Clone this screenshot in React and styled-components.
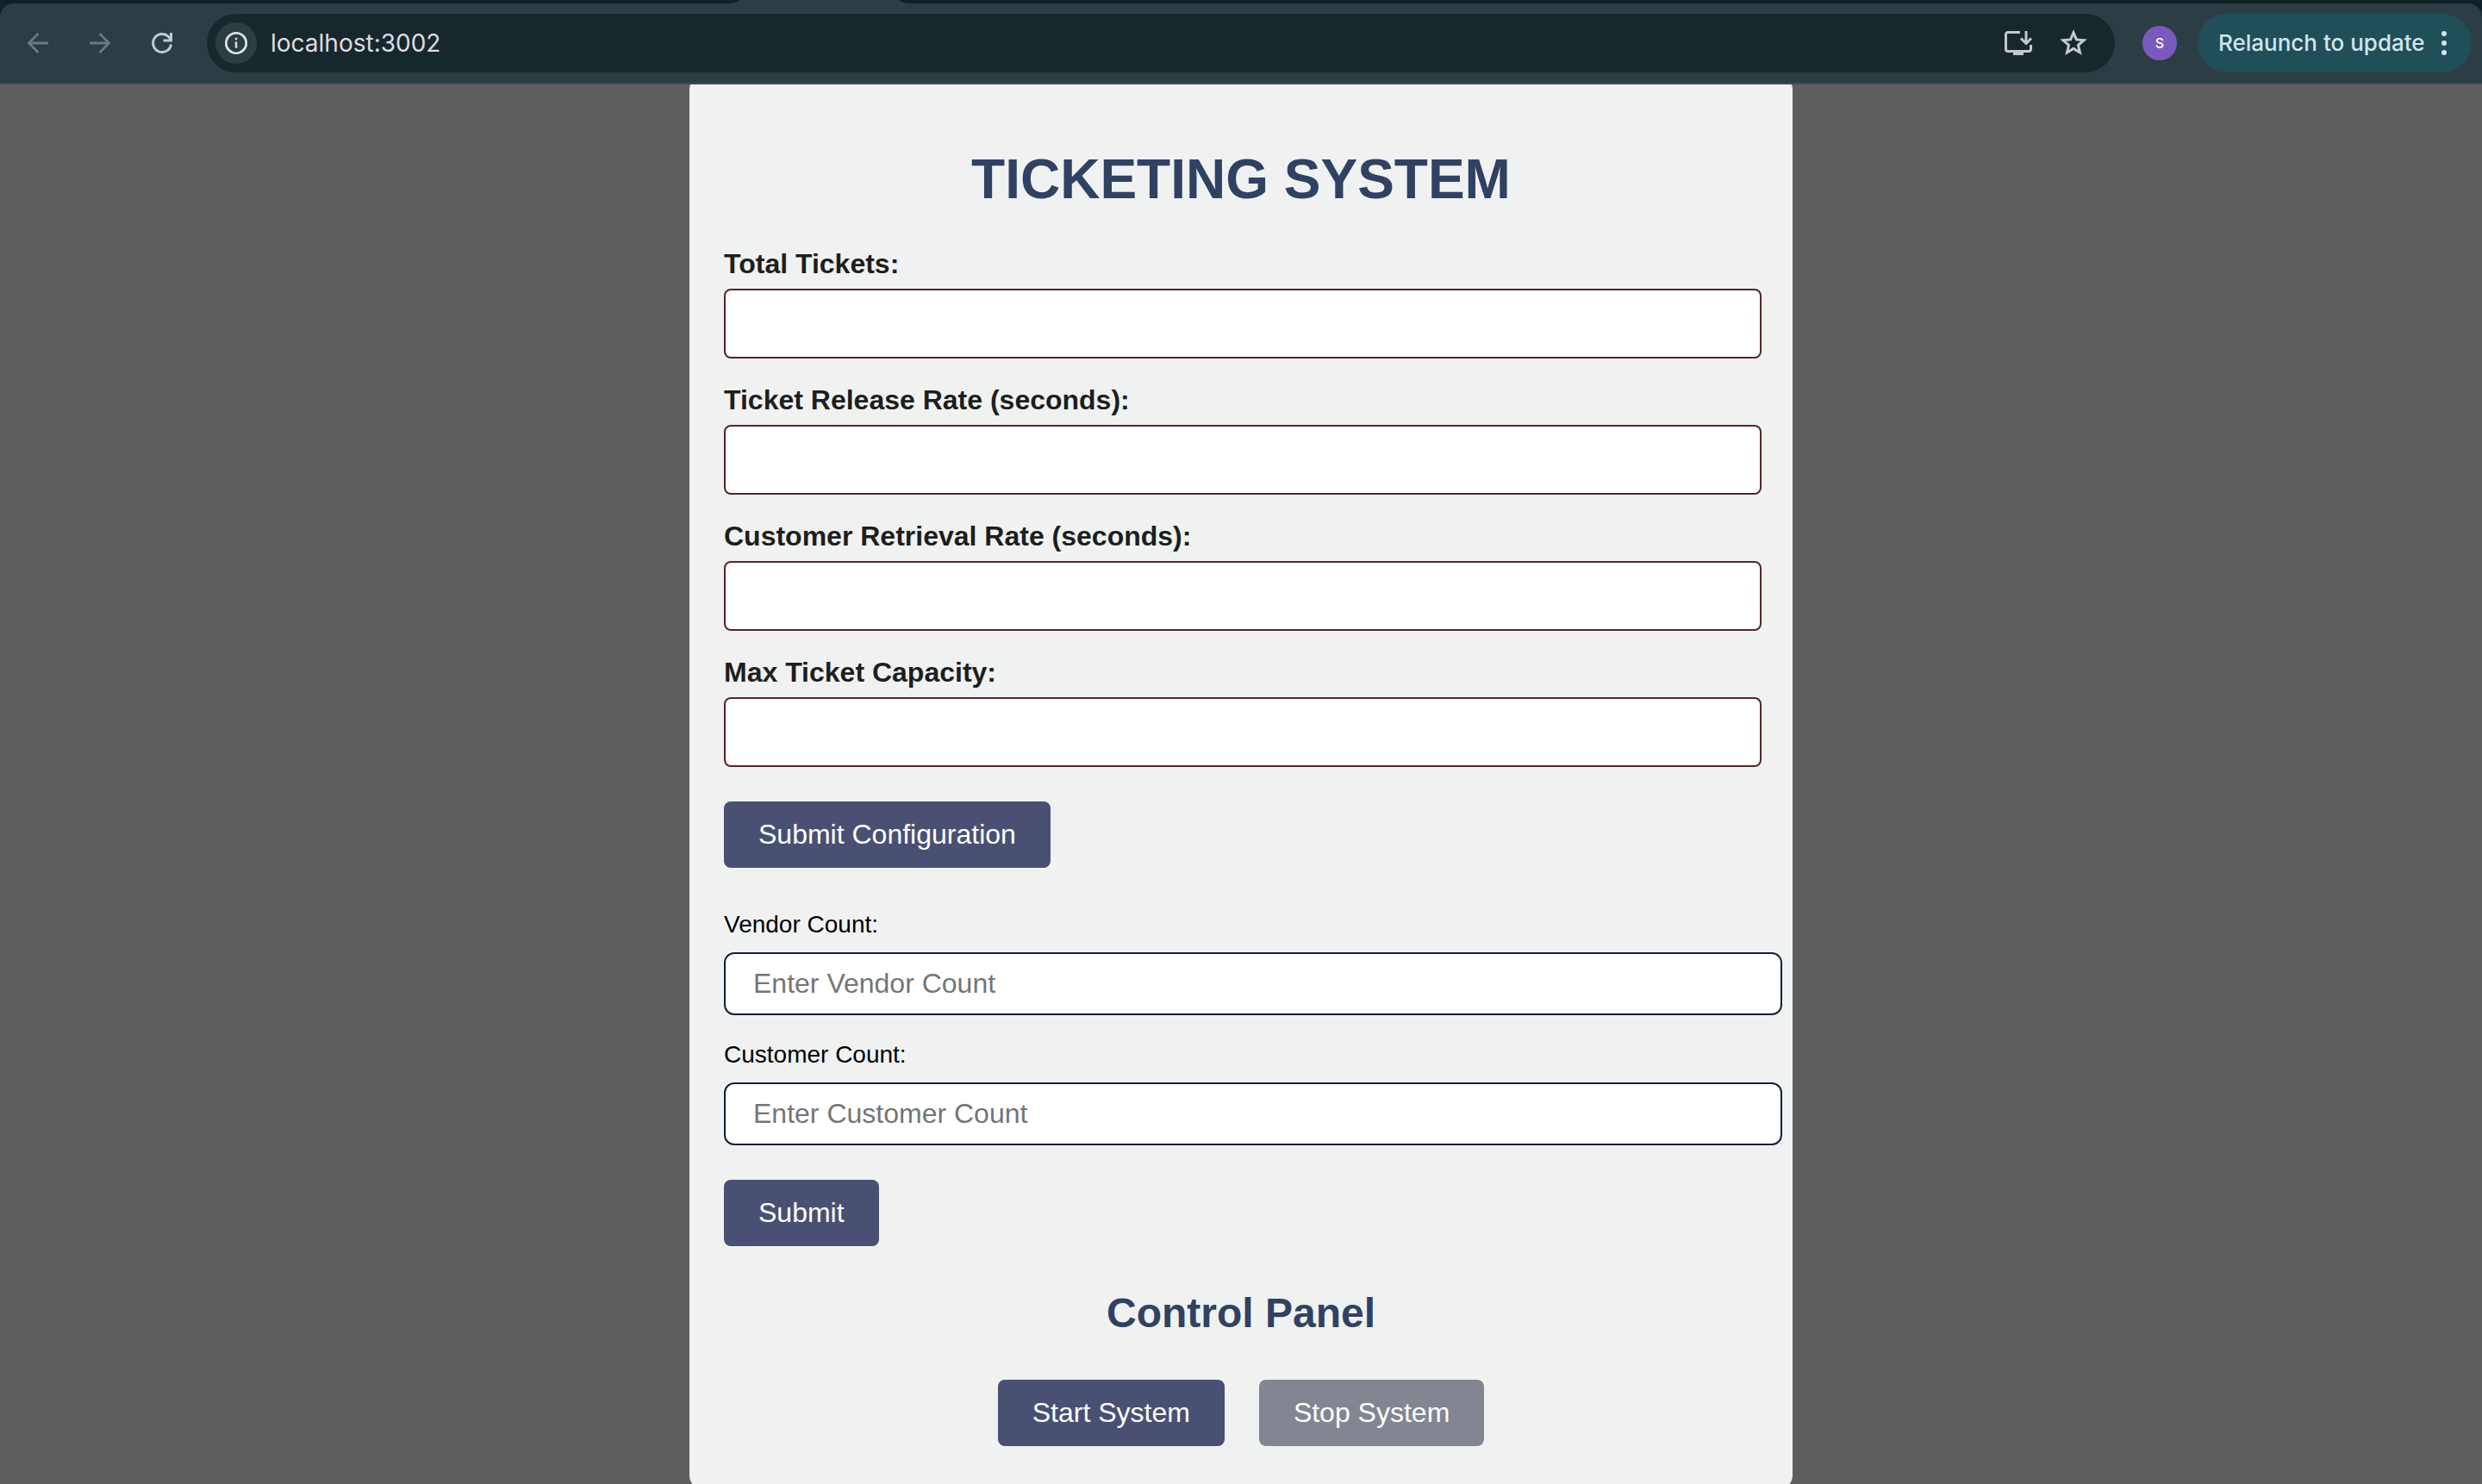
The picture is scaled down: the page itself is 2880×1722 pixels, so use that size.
import React from "react";
import styled, { createGlobalStyle } from "styled-components";

const GlobalStyle = createGlobalStyle`
  * { box-sizing: border-box; }
  body {
    margin: 0;
    background: #5d5f5e;
    font-family: "Liberation Sans", Arial, Helvetica, sans-serif;
  }
`;

const Window = styled.div`
  display: flex;
  flex-direction: column;
  height: 100vh;
  background: #102228;
`;

const TabStrip = styled.div`
  display: flex;
  flex: none;
  height: 4px;
  background: #2d3d44;
`;

const TabGap = styled.div`
  background: #102228;
  ${(p) =>
    p.$side === "left"
      ? "flex: 0 0 858px; border-bottom-right-radius: 14px 4px;"
      : "flex: 1; border-bottom-left-radius: 14px 4px;"}
`;

const ActiveTab = styled.div`
  flex: 0 0 186px;
`;

const Toolbar = styled.header`
  display: flex;
  flex: none;
  align-items: center;
  height: 94px;
  padding: 0 12px 0 8px;
  background: #2d3d44;
  border-bottom: 2px solid #454b4c;
  border-radius: 16px 16px 0 0;
  font-family: Inter, Roboto, sans-serif;
`;

const IconButton = styled.button`
  display: grid;
  place-items: center;
  flex: none;
  width: ${(p) => p.$size || 72}px;
  height: ${(p) => p.$size || 72}px;
  padding: 0;
  border: 0;
  border-radius: 50%;
  background: ${(p) => p.$fill || "transparent"};
  color: ${(p) => p.$color || "#c6c8ca"};
`;

const AddressBar = styled.div`
  display: flex;
  flex: 1;
  align-items: center;
  height: 68px;
  margin-left: 16px;
  padding: 0 12px 0 10px;
  border-radius: 34px;
  background: #17282d;
`;

const AddressInput = styled.input`
  flex: 1;
  min-width: 0;
  height: 48px;
  margin-left: 16px;
  padding: 0;
  border: 0;
  outline: 0;
  background: transparent;
  color: #dcdde0;
  font: 400 28px/36px Inter, Roboto, sans-serif;
`;

const Profile = styled.button`
  flex: none;
  width: 40px;
  height: 40px;
  margin: 0 24px 0 32px;
  padding: 0;
  border: 0;
  border-radius: 50%;
  background: #7a5abd;
  color: #fff;
  font: 500 16px/40px Inter, Roboto, sans-serif;
`;

const UpdateButton = styled.button`
  display: flex;
  flex: none;
  align-items: center;
  justify-content: space-between;
  width: 318px;
  height: 68px;
  padding: 0 28px 0 24px;
  border: 0;
  border-radius: 34px;
  background: #204e59;
  color: #d0e6ec;
  font: 500 26px/36px Inter, Roboto, sans-serif;
  white-space: nowrap;
`;

const Viewport = styled.main`
  flex: 1;
  min-height: 0;
  overflow-y: auto;
  scrollbar-width: none;
  background: #5d5f5e;
`;

const Card = styled.div`
  max-width: 1280px;
  margin: -10px auto 0;
  padding: 40px 40px 50px;
  border-radius: 16px;
  background: #f0f2f1;
`;

const Title = styled.h1`
  margin: 43px 0;
  color: #304263;
  font-size: 64px;
  line-height: 74px;
  text-align: center;
`;

const Form = styled.form`
  display: flex;
  flex-direction: column;
  align-items: flex-start;
  margin-bottom: 50px;
`;

const Field = styled.div`
  display: flex;
  flex-direction: column;
  margin-bottom: 30px;

  &:last-of-type { margin-bottom: 40px; }
`;

const ConfigField = styled(Field)`
  gap: 10px;
  width: calc(100% + 4px);
`;

const CountField = styled(Field)`
  gap: 16px;
  width: calc(100% + 28px);
`;

const ConfigLabel = styled.label`
  color: #1e1e1e;
  font-size: 32px;
  font-weight: 700;
  line-height: 37px;
`;

const CountLabel = styled.label`
  color: #000;
  font-size: 28px;
  line-height: 32px;
`;

const ConfigInput = styled.input`
  height: 81px;
  padding: 0 20px;
  border: 2px solid #562526;
  border-radius: 8px;
  background: #fff;
  font: 32px/37px "Liberation Sans", Arial, sans-serif;
`;

const CountInput = styled.input`
  height: 73px;
  padding: 0 32px;
  border: 2px solid #10203a;
  border-radius: 12px;
  background: #fff;
  font: 32px/37px "Liberation Sans", Arial, sans-serif;

  &::placeholder { color: #757575; }
`;

const Button = styled.button`
  padding: 20px 40px;
  border: 0;
  border-radius: 8px;
  background: ${(p) => (p.disabled ? "#828691" : "#4a5073")};
  color: #fff;
  font: 32px/37px "Liberation Sans", Arial, sans-serif;
`;

const PanelTitle = styled.h2`
  margin: 0 0 50px;
  color: #304263;
  font-size: 48px;
  line-height: 55px;
  text-align: center;
`;

const PanelActions = styled.div`
  display: flex;
  justify-content: center;
  gap: 40px;
`;

const Glyph = ({ size = 36, children }) => (
  <svg width={size} height={size} viewBox="0 0 24 24" fill="currentColor" aria-hidden="true">
    {children}
  </svg>
);

const configFields = [
  { id: "total-tickets", label: "Total Tickets:" },
  { id: "release-rate", label: "Ticket Release Rate (seconds):" },
  { id: "retrieval-rate", label: "Customer Retrieval Rate (seconds):" },
  { id: "max-capacity", label: "Max Ticket Capacity:" },
];

const countFields = [
  { id: "vendor-count", label: "Vendor Count:", placeholder: "Enter Vendor Count" },
  { id: "customer-count", label: "Customer Count:", placeholder: "Enter Customer Count" },
];

function BrowserBar() {
  return (
    <>
      <TabStrip>
        <TabGap $side="left" />
        <ActiveTab />
        <TabGap $side="right" />
      </TabStrip>
      <Toolbar>
        <IconButton $color="#6d7b80" aria-label="Back">
          <Glyph><path d="M20 11H7.2l5.7-5.700L11.700 4l-8 8 8 8 1.200-1.300L7.200 13H20z" /></Glyph>
        </IconButton>
        <IconButton $color="#6d7b80" aria-label="Forward">
          <Glyph><path d="M4 11h12.800l-5.700-5.700L12.300 4l8 8-8 8-1.200-1.300 5.700-5.700H4z" /></Glyph>
        </IconButton>
        <IconButton $color="#b6cdd3" aria-label="Reload">
          <Glyph>
            <path d="M19 13a7 7 0 1 1-2-6l2 2.200" fill="none" stroke="currentColor" strokeWidth="2" />
            <path d="M18 4h2v7h-7V9h5z" />
          </Glyph>
        </IconButton>
        <AddressBar>
          <IconButton $size={48} $fill="#2d3d44" $color="#dfe3e6" aria-label="Site information">
            <Glyph size={32}>
              <circle cx="12" cy="12" r="8.800" fill="none" stroke="currentColor" strokeWidth="2" />
              <path d="M11.100 10.800h1.800v5.600h-1.800zM11.100 7.400h1.800v1.800h-1.800z" />
            </Glyph>
          </IconButton>
          <AddressInput aria-label="Address" defaultValue="localhost:3002" />
          <IconButton $size={56} aria-label="Install app">
            <svg width="32" height="30" viewBox="0 0 32 30" fill="none" stroke="currentColor" strokeWidth="3" aria-hidden="true">
              <path d="M18 2.500H4A2.500 2.500 0 0 0 1.500 5v17A2.500 2.500 0 0 0 4 24.500h24a2.500 2.500 0 0 0 2.500-2.500v-5" />
              <path d="M25 1v14M19 9.500l6 6 6-6" />
              <path d="M10 25h12v4H10z" fill="currentColor" stroke="none" />
            </svg>
          </IconButton>
          <IconButton $size={72} aria-label="Bookmark">
            <Glyph size={36}>
              <path
                d="M12 3.900l2.250 5.400 5.800.500-4.400 3.800 1.320 5.700L12 16.250l-4.970 3.050 1.320-5.700-4.400-3.800 5.800-.5z"
                fill="none"
                stroke="currentColor"
                strokeWidth="2"
              />
            </Glyph>
          </IconButton>
        </AddressBar>
        <Profile aria-label="Profile">S</Profile>
        <UpdateButton>
          Relaunch to update
          <svg width="8" height="30" viewBox="0 0 8 30" fill="currentColor" aria-hidden="true">
            <circle cx="4" cy="4" r="3" />
            <circle cx="4" cy="15" r="3" />
            <circle cx="4" cy="26" r="3" />
          </svg>
        </UpdateButton>
      </Toolbar>
    </>
  );
}

export default function App() {
  const stop = (e) => e.preventDefault();
  return (
    <Window>
      <GlobalStyle />
      <BrowserBar />
      <Viewport>
        <Card>
          <Title>TICKETING SYSTEM</Title>
          <Form onSubmit={stop}>
            {configFields.map((f) => (
              <ConfigField key={f.id}>
                <ConfigLabel htmlFor={f.id}>{f.label}</ConfigLabel>
                <ConfigInput id={f.id} type="text" inputMode="numeric" />
              </ConfigField>
            ))}
            <Button type="submit">Submit Configuration</Button>
          </Form>
          <Form onSubmit={stop}>
            {countFields.map((f) => (
              <CountField key={f.id}>
                <CountLabel htmlFor={f.id}>{f.label}</CountLabel>
                <CountInput id={f.id} type="text" inputMode="numeric" placeholder={f.placeholder} />
              </CountField>
            ))}
            <Button type="submit">Submit</Button>
          </Form>
          <PanelTitle>Control Panel</PanelTitle>
          <PanelActions>
            <Button type="button">Start System</Button>
            <Button type="button" disabled>Stop System</Button>
          </PanelActions>
        </Card>
      </Viewport>
    </Window>
  );
}
